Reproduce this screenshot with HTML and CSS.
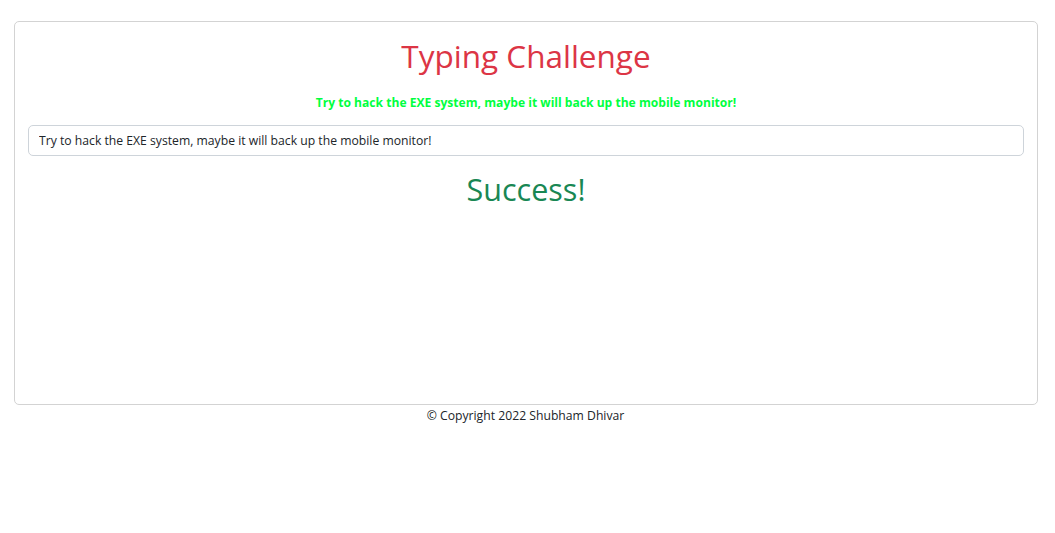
FILE: index.html
```html
<!DOCTYPE html>
<html lang="en">
<head>
<meta charset="utf-8">
<title>Typing Challenge</title>
<link rel="stylesheet" href="styles.css">
</head>
<body>
<main class="page">
  <section class="card">
    <h1 class="title">Typing Challenge</h1>
    <p class="prompt">Try to hack the EXE system, maybe it will back up the mobile monitor!</p>
    <input class="answer" type="text" value="Try to hack the EXE system, maybe it will back up the mobile monitor!">
    <h2 class="result">Success!</h2>
  </section>
  <footer class="footer">© Copyright 2022 Shubham Dhivar</footer>
</main>
</body>
</html>
```
FILE: styles.css
```css
* { box-sizing: border-box; }
html, body { margin: 0; padding: 0; background: #fff; }
body {
  font-family: "Open Sans", "Noto Sans", sans-serif;
  color: #212529;
}
.page {
  padding: 21px 17px 0 14px;
}
.card {
  border: 1px solid #d3d3d3;
  border-radius: 5px;
  height: 384px;
  padding: 13px 13px 0 13px;
  display: flex;
  flex-direction: column;
  align-items: center;
}
.title {
  margin: 0;
  font-size: 31.5px;
  font-weight: 500;
  line-height: 42px;
  color: #dc3545;
}
.prompt {
  margin: 17px 0 0 0;
  font-size: 12.1px;
  font-weight: 700;
  line-height: 18px;
  color: #00ff40;
}
.answer {
  margin-top: 13px;
  width: 100%;
  height: 31px;
  border: 1px solid #ced4da;
  border-radius: 5px;
  padding: 0 10px;
  font-family: inherit;
  font-size: 12.2px;
  color: #212529;
  background: #fff;
}
.result {
  margin: 11px 0 0 0;
  font-size: 30.5px;
  font-weight: 500;
  line-height: 44px;
  color: #198754;
}
.footer {
  text-align: center;
  padding-right: 1px;
  padding-top: 1px;
  font-size: 12.2px;
  line-height: 20px;
}
```
